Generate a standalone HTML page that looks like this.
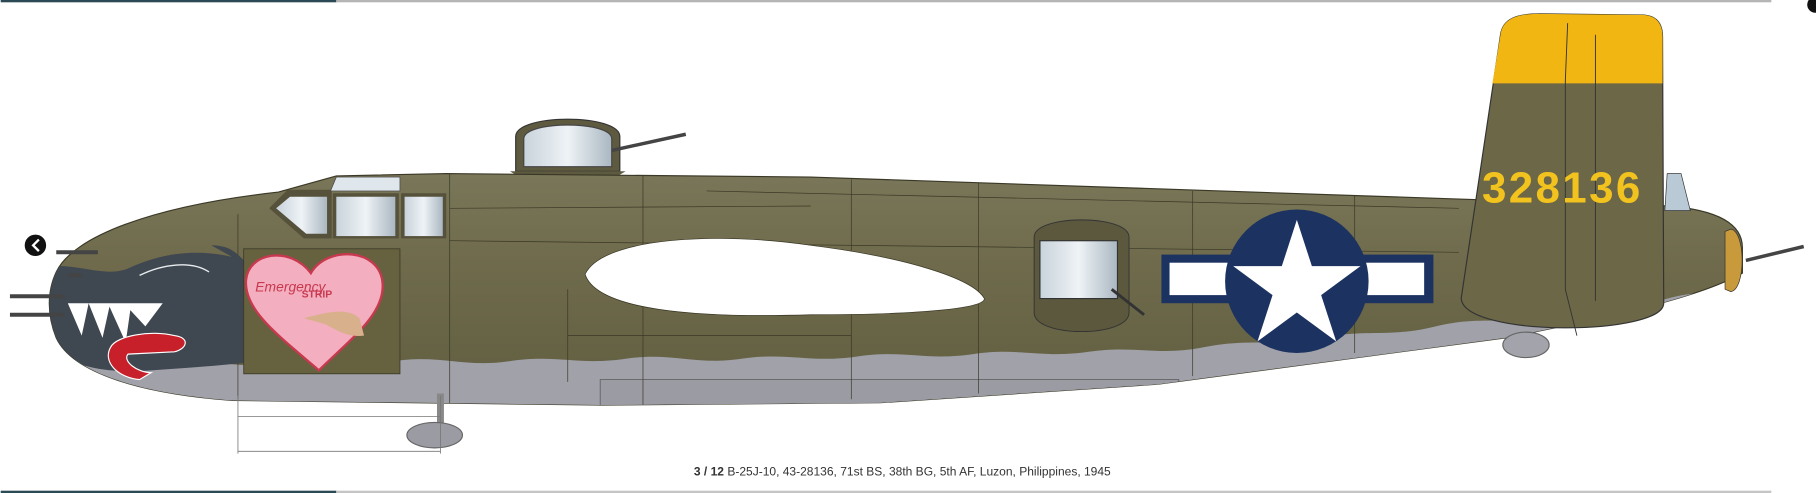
<!DOCTYPE html>
<html><head><meta charset="utf-8"><style>
html,body{margin:0;padding:0;background:#fff;width:1816px;height:493px;overflow:hidden}
svg{display:block}
</style></head><body>
<svg width="1816" height="493" viewBox="0 0 1568 426" xmlns="http://www.w3.org/2000/svg" font-family="Liberation Sans, sans-serif">
<defs>
<clipPath id="fus"><path id="fp" d="M48,235 C62,205 130,178 240,166 L290,152 L385,150 L700,153 L1260,172 L1440,178 C1480,181 1505,192 1505,214 L1505,236 C1470,256 1400,272 1300,292 L1000,332 L760,348 L520,350 L200,346 C120,340 62,322 48,292 C40,272 40,252 48,235 Z"/></clipPath>
<linearGradient id="glass" x1="0" x2="1"><stop offset="0" stop-color="#c9d3db"/><stop offset=".5" stop-color="#eef3f6"/><stop offset="1" stop-color="#aab7c1"/></linearGradient>
<linearGradient id="shade" x1="0" y1="0" x2="0" y2="1"><stop offset="0" stop-color="#7a7659"/><stop offset=".4" stop-color="#6e6a4b"/><stop offset="1" stop-color="#615d40"/></linearGradient>
</defs>
<rect x="0" y="0" width="290" height="2" fill="#2c4a55"/><rect x="290" y="0" width="1240" height="2" fill="#b5b5b5"/>
<rect x="0" y="424" width="290" height="2" fill="#2c4a55"/><rect x="290" y="424" width="1240" height="2" fill="#c5c5c5"/>
<path d="M445,148 L445,118 C445,98 535,98 535,118 L535,148 Z" fill="#5e5a40" stroke="#333" stroke-width="1"/>
<path d="M452,144 L452,120 C452,104 528,104 528,120 L528,144 Z" fill="url(#glass)" stroke="#444"/>
<line x1="528" y1="130" x2="592" y2="116" stroke="#444" stroke-width="3"/>
<path d="M440,148 L540,148 L520,160 L460,160 Z" fill="#5e5a40"/>
<use href="#fp" fill="url(#shade)" stroke="#3a3826" stroke-width="1"/>
<g clip-path="url(#fus)">
<path d="M30,320 C80,300 100,318 140,312 C180,306 200,322 240,312 C280,302 300,316 340,312 C380,306 400,318 440,312 C480,306 500,316 540,310 C580,304 600,316 640,310 C680,304 700,314 740,308 C780,302 800,312 840,306 C880,300 900,310 940,304 C980,298 1000,308 1040,300 C1080,292 1100,300 1140,292 C1180,284 1200,292 1240,282 C1280,272 1300,282 1340,272 C1380,262 1400,270 1440,258 C1470,250 1490,255 1520,245 L1520,400 L30,400 Z" fill="#a0a1a9"/>
<rect x="518" y="328" width="500" height="30" fill="#9a9ba3" stroke="#555" stroke-width=".6"/>
<g stroke="#3a3826" stroke-width=".6" fill="none">
<line x1="205" y1="185" x2="205" y2="345"/><line x1="388" y1="150" x2="388" y2="350"/>
<line x1="555" y1="152" x2="555" y2="350"/><line x1="735" y1="155" x2="735" y2="345"/>
<line x1="845" y1="157" x2="845" y2="340"/><line x1="1030" y1="165" x2="1030" y2="325"/>
<line x1="1170" y1="168" x2="1170" y2="305"/><line x1="388" y1="208" x2="1260" y2="218"/>
<line x1="388" y1="180" x2="700" y2="178"/><line x1="490" y1="250" x2="490" y2="330"/>
<line x1="490" y1="290" x2="555" y2="290"/><line x1="555" y1="290" x2="735" y2="290"/>
<path d="M610,165 C800,168 1000,175 1260,180"/>
</g>
<path d="M40,230 C70,228 90,240 110,232 C140,218 170,215 200,222 L182,212 C200,212 205,220 215,230 L240,238 L215,250 L238,262 L212,272 L235,288 L210,300 L225,312 C190,316 160,318 130,320 C100,322 70,320 50,305 C38,290 38,260 40,230 Z" fill="#3f4750"/>
<path d="M58,262 L70,290 L76,262 L88,292 L94,265 L108,296 L112,268 L125,282 L140,262 Z" fill="#fff"/>
<path d="M95,300 C100,290 130,285 150,290 C165,292 160,302 150,304 L110,306 C105,312 118,322 130,322 L120,328 C100,326 88,312 95,300 Z" fill="#c8202b" stroke="#fff" stroke-width="1"/>
<path d="M120,238 C140,228 165,225 180,235" stroke="#e8ecef" stroke-width="1.2" fill="none"/>
<rect x="210" y="215" width="135" height="108" fill="#66623f" stroke="#3a3826" stroke-width=".7"/>
<path d="M275,320 C240,290 210,268 212,242 C214,218 250,212 268,236 C282,212 328,214 330,245 C332,272 300,295 275,320 Z" fill="#f3aebf" stroke="#c8384e" stroke-width="2"/>
<path d="M262,275 C280,270 300,265 310,275 L314,290 C300,292 290,285 280,280 Z" fill="#d9b08c"/>
<text x="220" y="252" font-size="12" fill="#c8384e" font-style="italic">Emergency</text>
<text x="260" y="257" font-size="9" fill="#c8384e" font-weight="bold">STRIP</text>
<path d="M232,180 L248,164 L286,164 L286,206 L262,206 Z" fill="#55513a"/>
<rect x="287" y="167" width="57" height="39" fill="#55513a"/><rect x="346" y="167" width="39" height="39" fill="#55513a"/>
<path d="M238,180 L250,170 L282,170 L282,202 L264,202 Z" fill="url(#glass)"/>
<rect x="290" y="170" width="51" height="34" fill="url(#glass)"/><rect x="349" y="170" width="33" height="34" fill="url(#glass)"/>
<path d="M285,165 L290,153 L345,153 L345,165 Z" fill="#dfe7ec" stroke="#444" stroke-width=".6"/>
<path d="M505,237 C520,205 620,200 700,212 C780,222 840,240 850,258 C850,266 800,272 700,272 C600,275 515,268 505,237 Z" fill="#fff" stroke="#3a3826" stroke-width=".6"/>
<path d="M893,205 C893,185 975,185 975,205 L975,270 C975,292 893,292 893,270 Z" fill="#5c583d" stroke="#333" stroke-width=".8"/>
<rect x="898" y="208" width="67" height="50" fill="url(#glass)" stroke="#333"/>
<line x1="960" y1="250" x2="988" y2="272" stroke="#333" stroke-width="2.5"/>
<rect x="1003" y="220" width="235" height="42" fill="#1c3260"/>
<rect x="1010" y="227" width="220" height="28" fill="#fff"/>
<circle cx="1120" cy="243" r="62" fill="#1c3260"/>
<path d="M1120,190 L1133,230 L1175,230 L1141,255 L1154,295 L1120,270 L1086,295 L1099,255 L1065,230 L1107,230 Z" fill="#fff"/>
</g>
<path d="M1495,198 C1508,200 1508,250 1495,252 L1490,250 L1490,200 Z" fill="#c99a3b" stroke="#333" stroke-width=".6"/>
<line x1="1508" y1="225" x2="1558" y2="213" stroke="#444" stroke-width="3"/>
<path d="M1296,30 C1298,16 1310,12 1330,12 L1420,13 C1432,14 1436,22 1436,32 L1437,262 C1437,290 1265,292 1262,258 Z" fill="#6b6747" stroke="#333" stroke-width="1"/>
<path d="M1296,30 C1298,16 1310,12 1330,12 L1420,13 C1432,14 1436,22 1436,32 L1436,72 L1289,72 Z" fill="#f2b613"/>
<g stroke="#333" stroke-width=".8" fill="none"><path d="M1354,20 L1352,70 L1352,250 L1362,290"/><path d="M1378,30 L1378,260"/></g>
<text x="1280" y="175" font-size="38" fill="#f2c21e" font-weight="bold" letter-spacing="2">328136</text>
<path d="M1440,150 L1452,150 L1460,182 L1438,182 Z" fill="#b9cad6" stroke="#333" stroke-width=".6"/>
<g stroke="#444" stroke-width="3.5">
<line x1="48" y1="218" x2="84" y2="218"/><line x1="58" y1="238" x2="70" y2="238"/>
<line x1="8" y1="256" x2="55" y2="256"/><line x1="8" y1="272" x2="55" y2="272"/>
</g>
<line x1="380" y1="340" x2="380" y2="368" stroke="#888" stroke-width="6"/>
<ellipse cx="375" cy="376" rx="24" ry="11" fill="#9a9ba3" stroke="#666"/>
<ellipse cx="1318" cy="298" rx="20" ry="11" fill="#a3a4ab" stroke="#666"/>
<g stroke="#777" stroke-width=".7" fill="none">
<line x1="205" y1="342" x2="205" y2="392"/><line x1="380" y1="342" x2="380" y2="392"/>
<line x1="205" y1="360" x2="380" y2="360"/><line x1="205" y1="390" x2="380" y2="390"/>
</g>
<circle cx="30" cy="212" r="10" fill="#111" stroke="#fff" stroke-width="1.5"/>
<path d="M33,207 L28,212 L33,217" stroke="#fff" stroke-width="2" fill="none"/>
<circle cx="1568" cy="4" r="7" fill="#111"/>
<text x="599" y="411" font-size="10.4" fill="#333"><tspan font-weight="bold">3 / 12</tspan>   B-25J-10, 43-28136, 71st BS, 38th BG, 5th AF, Luzon, Philippines, 1945</text>
</svg>
</body></html>
